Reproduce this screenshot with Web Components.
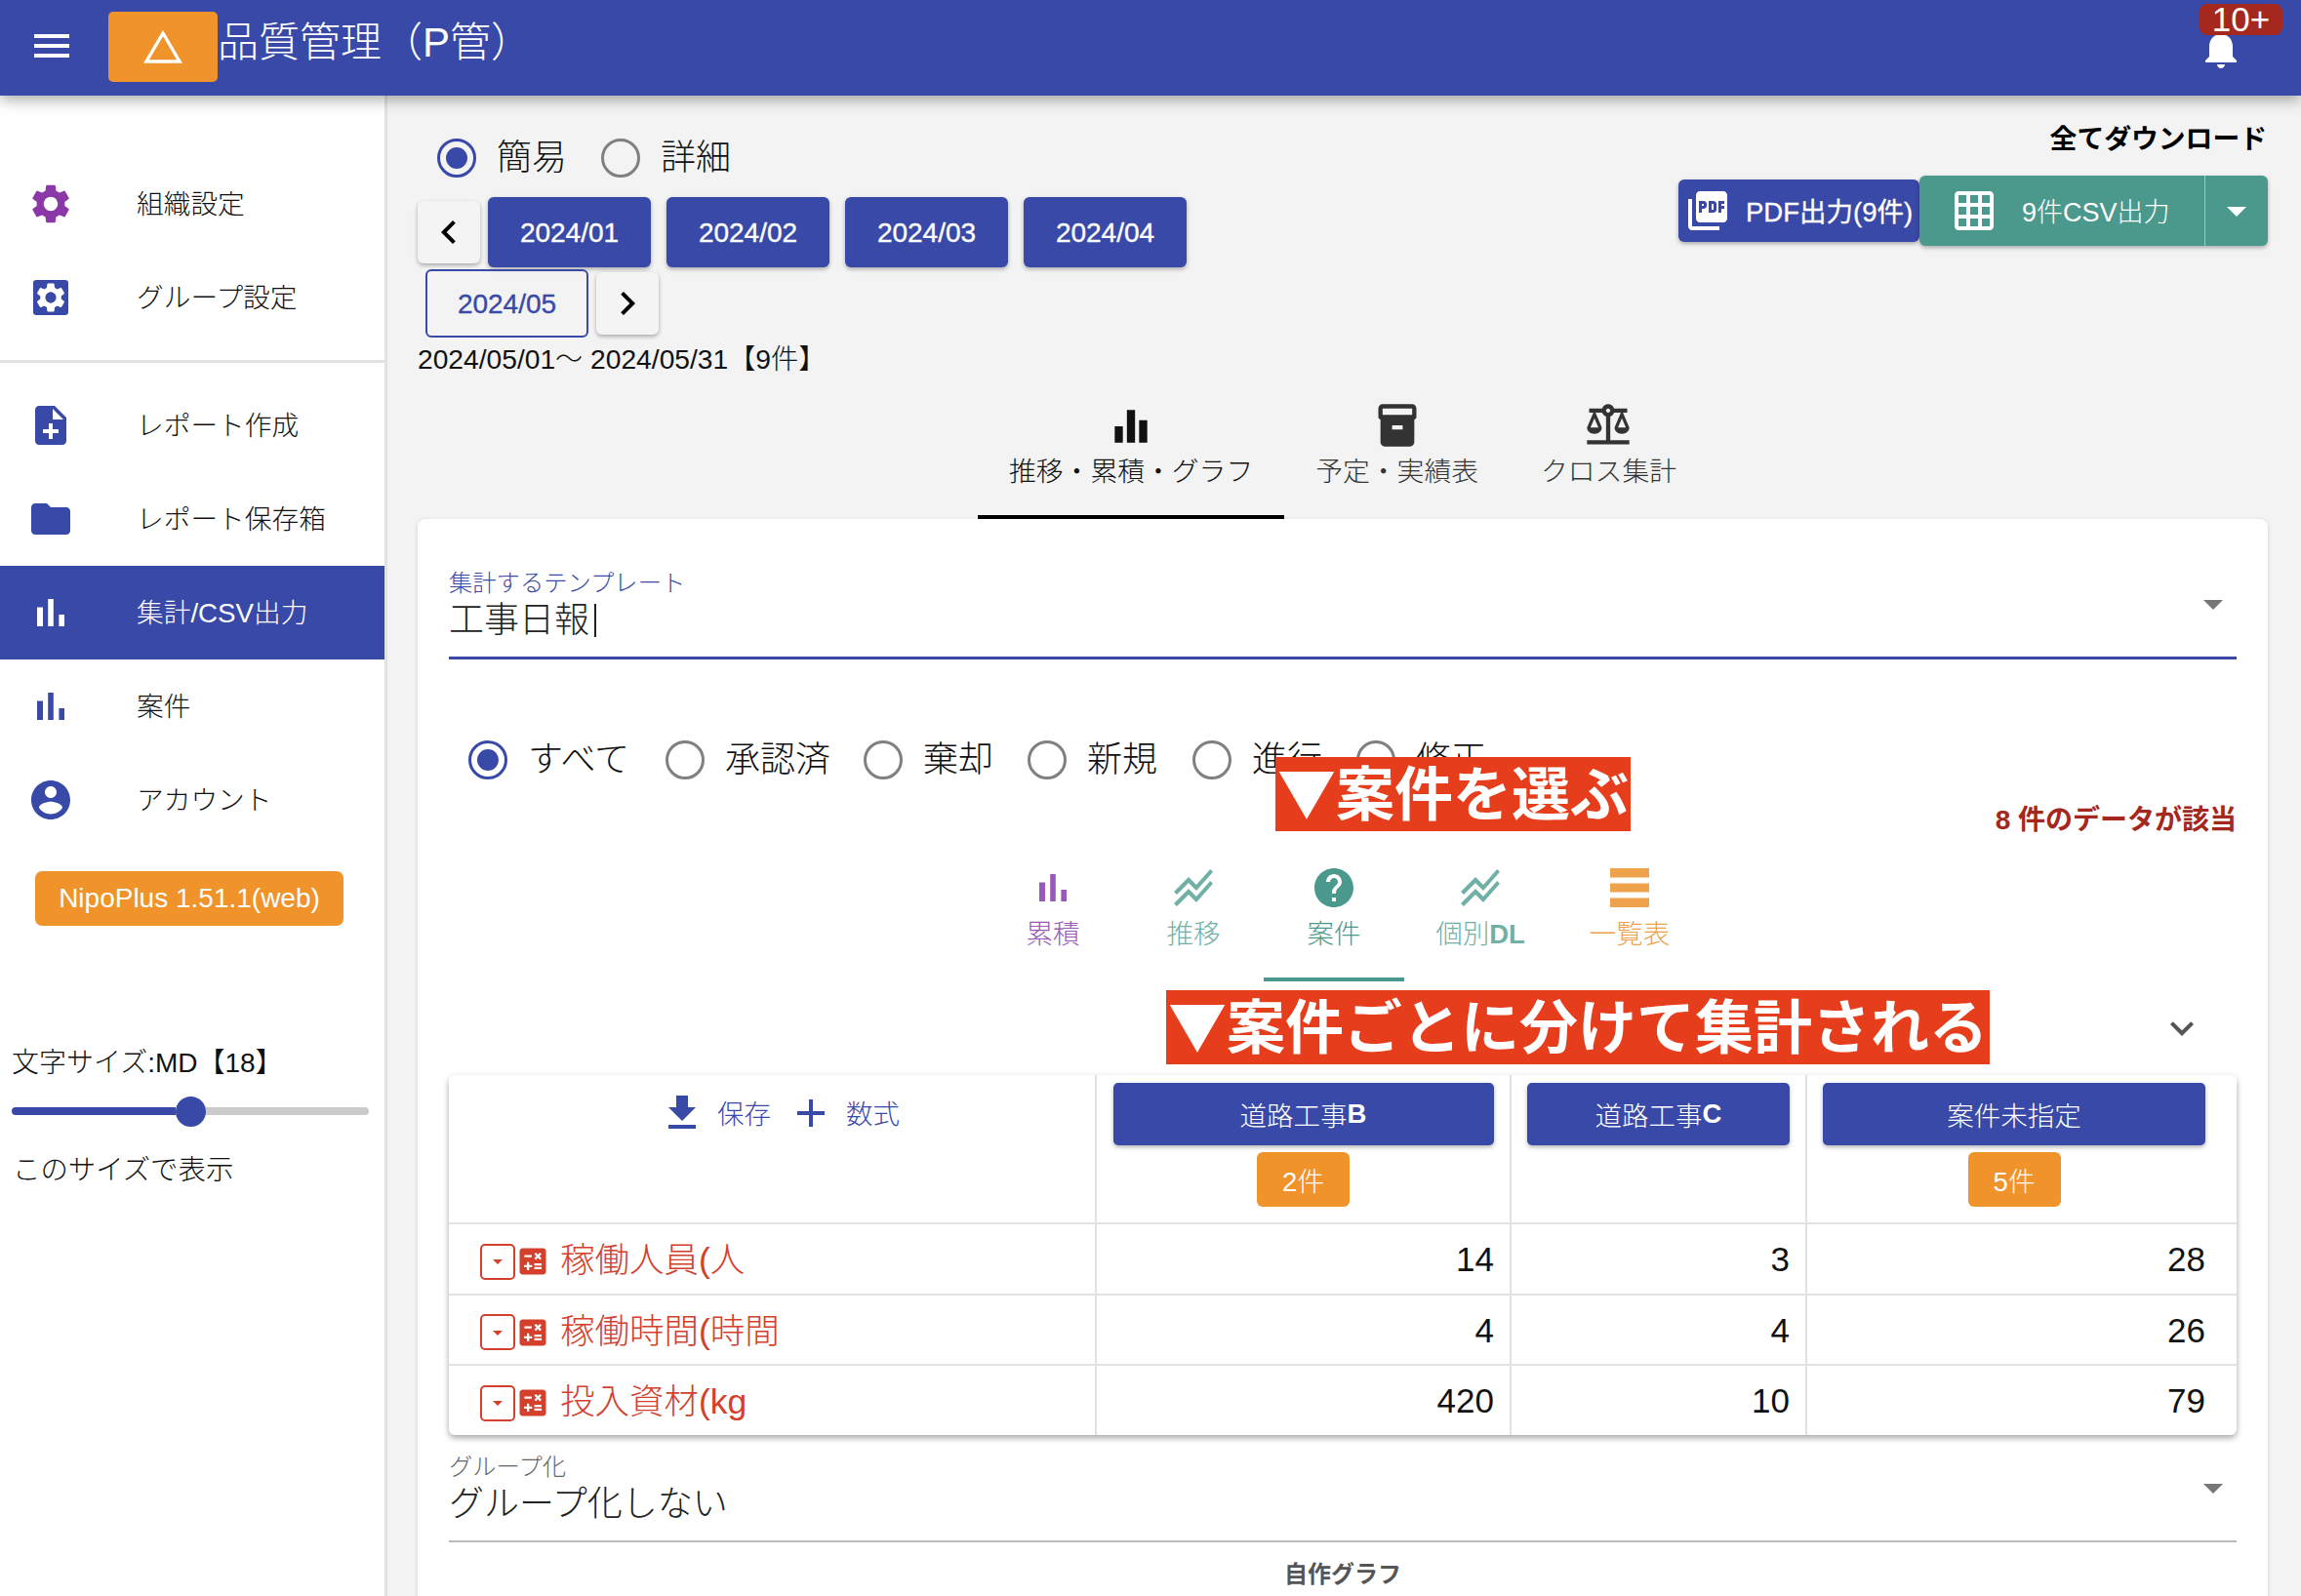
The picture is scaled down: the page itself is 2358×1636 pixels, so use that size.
<!DOCTYPE html>
<html lang="ja">
<head>
<meta charset="utf-8">
<title>品質管理</title>
<style>
    html, body {
        margin: 0;
        padding: 0;
        height: 100%;
        overflow: hidden;
        background: #f3f3f3;
        font-family: "Liberation Sans", "Noto Sans CJK JP", sans-serif;
        color: #111;
    }
</style>
</head>
<body>
<app-shell></app-shell>

<script>
const BLUE = "#3949a7";
const TEAL = "#4b998d";
const ORANGE = "#f0932b";
const GEAR = "M19.14 12.94c.04-.3.06-.61.06-.94 0-.32-.02-.64-.07-.94l2.03-1.58c.18-.14.23-.41.12-.61l-1.92-3.32c-.12-.22-.37-.29-.59-.22l-2.39.96c-.5-.38-1.03-.7-1.62-.94l-.36-2.54c-.04-.24-.24-.41-.48-.41h-3.84c-.24 0-.43.17-.47.41l-.36 2.54c-.59.24-1.13.57-1.62.94l-2.39-.96c-.22-.08-.47 0-.59.22L2.74 8.87c-.12.21-.08.47.12.61l2.03 1.58c-.05.3-.09.63-.09.94s.02.64.07.94l-2.03 1.58c-.18.14-.23.41-.12.61l1.92 3.32c.12.22.37.29.59.22l2.39-.96c.5.38 1.03.7 1.62.94l.36 2.54c.05.24.24.41.48.41h3.84c.24 0 .44-.17.47-.41l.36-2.54c.59-.24 1.13-.56 1.62-.94l2.39.96c.22.08.47 0 .59-.22l1.92-3.32c.12-.22.07-.47-.12-.61l-2.01-1.58zM12 15.6c-1.98 0-3.6-1.62-3.6-3.6s1.62-3.6 3.6-3.6 3.6 1.62 3.6 3.6-1.62 3.6-3.6 3.6z";
const ICONS = {
    menu: `<path d="M3 18h18v-2H3v2zm0-5h18v-2H3v2zm0-7v2h18V6H3z"/>`,
    gear: `<path d="${GEAR}"/>`,
    gearbox: `<rect x="3" y="3" width="18" height="18" rx="1.6"/><path fill="#fff" transform="translate(3 3) scale(.75)" d="${GEAR}"/><circle cx="12" cy="12" r="2.7"/>`,
    note: `<path d="M14 2H6c-1.1 0-1.99.9-1.99 2L4 20c0 1.1.89 2 1.99 2H18c1.1 0 2-.9 2-2V8l-6-6zm2 14h-3v3h-2v-3H8v-2h3v-3h2v3h3v2zm-3-7V3.5L18.5 9H13z"/>`,
    folder: `<path d="M10 4H4c-1.1 0-1.99.9-1.99 2L2 18c0 1.1.9 2 2 2h16c1.1 0 2-.9 2-2V8c0-1.1-.9-2-2-2h-8l-2-2z"/>`,
    bars: `<path d="M5 9.2h3V19H5zM10.6 5h2.8v14h-2.8zm5.6 8H19v6h-2.8z"/>`,
    equalizer: `<path d="M10 20h4V4h-4v16zm-6 0h4v-8H4v8zM16 9v11h4V9h-4z"/>`,
    account: `<path d="M12 2C6.48 2 2 6.48 2 12s4.48 10 10 10 10-4.48 10-10S17.52 2 12 2zm0 3c1.66 0 3 1.34 3 3s-1.34 3-3 3-3-1.34-3-3 1.34-3 3-3zm0 14.2c-2.5 0-4.71-1.28-6-3.22.03-1.99 4-3.08 6-3.08 1.99 0 5.97 1.09 6 3.08-1.29 1.94-3.5 3.22-6 3.22z"/>`,
    box: `<path fill-rule="evenodd" d="M5 2h14c1.1 0 2 .9 2 2v4c0 .6-.4 1-1 1.3V20c0 1.1-.9 2-2 2H6c-1.1 0-2-.9-2-2V9.3C3.4 9 3 8.6 3 8V4c0-1.1.9-2 2-2zm0 2v3h14V4H5zm4.5 8v2h5v-2h-5z"/>`,
    balance: `<path d="M13 7.83c.85-.3 1.53-.98 1.83-1.83H18l-3 7c0 1.66 1.57 3 3.5 3s3.5-1.34 3.5-3l-3-7h2V4h-6.17c-.41-1.17-1.52-2-2.83-2s-2.42.83-2.83 2H3v2h2l-3 7c0 1.66 1.57 3 3.5 3S9 14.66 9 13L6 6h3.17c.3.85.98 1.53 1.83 1.83V19H2v2h20v-2h-9V7.83zM20.37 13h-3.74l1.87-4.36L20.37 13zm-13 0H3.63L5.5 8.64 7.37 13zM12 6c-.55 0-1-.45-1-1s.45-1 1-1 1 .45 1 1-.45 1-1 1z"/>`,
    zigzag: `<path d="M2 19.99l7.5-7.51 4 4 7.09-7.97L22 9.92l-8.5 9.56-4-4-6 6.01-1.5-1.5zm1.5-4.5l6-6.01 4 4L22 3.92l-1.41-1.41-7.09 7.97-4-4L2 13.99l1.5 1.5z"/>`,
    help: `<path d="M12 2C6.48 2 2 6.48 2 12s4.48 10 10 10 10-4.48 10-10S17.52 2 12 2zm1 17h-2v-2h2v2zm2.07-7.75l-.9.92C13.45 12.9 13 13.5 13 15h-2v-.5c0-1.1.45-2.1 1.17-2.83l1.24-1.26c.37-.36.59-.86.59-1.41 0-1.1-.9-2-2-2s-2 .9-2 2H8c0-2.21 1.79-4 4-4s4 1.79 4 4c0 .88-.36 1.68-.93 2.25z"/>`,
    list: `<path d="M2 2h20v4.7H2zM2 9.7h20v4.6H2zM2 17.3h20V22H2z"/>`,
    download: `<path d="M19 9h-4V3H9v6H5l7 7 7-7zM5 18v2h14v-2H5z"/>`,
    plus: `<path d="M19 13h-6v6h-2v-6H5v-2h6V5h2v6h6v2z"/>`,
    calc: `<path d="M19 3H5c-1.1 0-2 .9-2 2v14c0 1.1.9 2 2 2h14c1.1 0 2-.9 2-2V5c0-1.1-.9-2-2-2zm-5.97 4.06L14.09 6l1.41 1.41L16.91 6l1.06 1.06-1.41 1.41 1.41 1.41-1.06 1.06-1.41-1.4-1.41 1.41-1.06-1.06 1.41-1.41-1.41-1.42zm-6.78.66h5v1.5h-5v-1.5zM11.5 16h-2v2H8v-2H6v-1.5h2v-2h1.5v2h2V16zm6.5 1.25h-5v-1.5h5v1.5zm0-2.5h-5v-1.5h5v1.5z"/>`,
    bell: `<path d="M12 22c1.1 0 2-.9 2-2h-4c0 1.1.89 2 2 2zm6-6v-5c0-3.07-1.64-5.64-4.5-6.32V4c0-.83-.67-1.5-1.5-1.5s-1.5.67-1.5 1.5v.68C7.63 5.36 6 7.92 6 11v5l-2 2v1h16v-1l-2-2z"/>`,
    pdf: `<path d="M20 2H8c-1.1 0-2 .9-2 2v12c0 1.1.9 2 2 2h12c1.1 0 2-.9 2-2V4c0-1.1-.9-2-2-2zm-8.5 7.5c0 .83-.67 1.5-1.5 1.5H9v2H7.5V7H10c.83 0 1.5.67 1.5 1.5v1zm5 2c0 .83-.67 1.5-1.5 1.5h-2.5V7H15c.83 0 1.5.67 1.5 1.5v3zm4-3H19v1h1.5V11H19v2h-1.5V7h3v1.5zM9 9.5h1v-1H9v1zM4 6H2v14c0 1.1.9 2 2 2h14v-2H4V6zm10 5.5h1v-3h-1v3z"/>`,
    grid: `<path d="M20 2H4c-1.1 0-2 .9-2 2v16c0 1.1.9 2 2 2h16c1.1 0 2-.9 2-2V4c0-1.1-.9-2-2-2zM8 20H4v-4h4v4zm0-6H4v-4h4v4zm0-6H4V4h4v4zm6 12h-4v-4h4v4zm0-6h-4v-4h4v4zm0-6h-4V4h4v4zm6 12h-4v-4h4v4zm0-6h-4v-4h4v4zm0-6h-4V4h4v4z"/>`,
    chevronDown: `<path d="M7.41 8.59L12 13.17l4.59-4.58L18 10l-6 6-6-6z"/>`,
    left: `<path d="M15.41 7.41L14 6l-6 6 6 6 1.41-1.41L10.83 12z"/>`,
    right: `<path d="M10 6L8.59 7.41 13.17 12l-4.58 4.59L10 18l6-6z"/>`,
    drop: `<path d="M7 10l5 5 5-5z"/>`
};

class MatIcon extends HTMLElement {
    constructor() {
        super();
        this.shadowDOM = this.attachShadow({mode: "open"});
    }
    connectedCallback() {
        const size = this.getAttribute("size") || 48;
        this.shadowDOM.innerHTML = `
        <style>
            :host { display: inline-flex; flex: none; width: ${size}px; height: ${size}px; }
            svg { width: 100%; height: 100%; fill: currentColor; display: block; }
        </style>
        <svg viewBox="0 0 24 24">${ICONS[this.getAttribute("name")]}</svg>`;
    }
}
customElements.define("mat-icon", MatIcon);

class AppHeader extends HTMLElement {
    constructor() {
        super();
        this.shadowDOM = this.attachShadow({mode: "open"});
        this.shadowDOM.innerHTML = `
        <style>
            :host {
                display: flex;
                align-items: flex-start;
                position: relative;
                z-index: 3;
                height: 98px;
                background: ${BLUE};
                color: #fff;
                box-shadow: 0 4px 14px rgba(0,0,0,.35);
            }
            .menu { margin: 23px 0 0 29px; }
            .logo {
                width: 112px;
                height: 72px;
                margin: 12px 0 0 34px;
                background: ${ORANGE};
                border-radius: 5px;
                display: flex;
                align-items: center;
                justify-content: center;
            }
            .title { font-size: 42px; line-height: 44px; margin-top: 22px; font-weight: 300; white-space: nowrap; }
            .bell { position: absolute; left: 2252px; top: 26px; }
            .badge {
                position: absolute;
                left: 2254px;
                top: 4px;
                width: 85px;
                height: 32px;
                border-radius: 8px;
                background: #a5281e;
                font-size: 35px;
                line-height: 32px;
                text-align: center;
            }
        </style>
        <mat-icon class="menu" name="menu"></mat-icon>
        <div class="logo">
            <svg width="42" height="36" viewBox="0 0 42 36"><path d="M21 4 L38 33 H4 Z" fill="none" stroke="#fff" stroke-width="3.4"/></svg>
        </div>
        <div class="title">品質管理（P管）</div>
        <mat-icon class="bell" name="bell"></mat-icon>
        <div class="badge">10+</div>`;
    }
}
customElements.define("app-header", AppHeader);

class NavItem extends HTMLElement {
    constructor() {
        super();
        this.shadowDOM = this.attachShadow({mode: "open"});
    }
    connectedCallback() {
        const active = this.hasAttribute("active");
        this.shadowDOM.innerHTML = `
        <style>
            :host {
                display: flex;
                align-items: center;
                height: 96px;
                padding-left: 28px;
                font-size: 27.7px;
                font-weight: 300;
                background: ${active ? BLUE : "transparent"};
                color: ${active ? "#fff" : "#111"};
            }
            mat-icon { color: ${active ? "#fff" : (this.getAttribute("color") || BLUE)}; margin-right: 64px; }
            .text { padding-bottom: 4px; }
        </style>
        <mat-icon name="${this.getAttribute("icon")}"></mat-icon>
        <span class="text"><slot></slot></span>`;
    }
}
customElements.define("nav-item", NavItem);

class SideNav extends HTMLElement {
    constructor() {
        super();
        this.shadowDOM = this.attachShadow({mode: "open"});
        this.shadowDOM.innerHTML = `
        <style>
            :host {
                display: block;
                box-sizing: border-box;
                width: 397px;
                flex: none;
                background: #fff;
                border-right: 3px solid #e2e2e2;
                padding-top: 63px;
            }
            hr { border: 0; border-top: 3px solid #e2e2e2; margin: 16px 0 16px; }
            .version {
                margin: 25px 0 0 36px;
                width: 316px;
                height: 56px;
                line-height: 56px;
                text-align: center;
                background: ${ORANGE};
                border-radius: 7px;
                color: #fff;
                font-size: 28px;
                white-space: nowrap;
            }
            .size-label { margin: 125px 0 0 12px; font-size: 28px; line-height: 32px; font-weight: 300; white-space: nowrap; }
            .slider { display: flex; align-items: center; width: 366px; height: 32px; margin: 17px 0 0 12px; }
            .on { width: 168px; height: 8px; background: ${BLUE}; border-radius: 4px 0 0 4px; }
            .thumb { width: 31px; height: 31px; border-radius: 50%; background: ${BLUE}; flex: none; }
            .off { flex: 1; height: 8px; background: #cacaca; border-radius: 0 4px 4px 0; }
            .apply { margin: 28px 0 0 13px; font-size: 28.4px; line-height: 32px; font-weight: 300; }
        </style>
        <nav-item icon="gear" color="#8a37a8">組織設定</nav-item>
        <nav-item icon="gearbox">グループ設定</nav-item>
        <hr>
        <nav-item icon="note">レポート作成</nav-item>
        <nav-item icon="folder">レポート保存箱</nav-item>
        <nav-item icon="bars" active>集計/CSV出力</nav-item>
        <nav-item icon="bars">案件</nav-item>
        <nav-item icon="account">アカウント</nav-item>
        <div class="version">NipoPlus 1.51.1(web)</div>
        <div class="size-label">文字サイズ:MD【18】</div>
        <div class="slider"><div class="on"></div><div class="thumb"></div><div class="off"></div></div>
        <div class="apply">このサイズで表示</div>`;
    }
}
customElements.define("side-nav", SideNav);

class RadioOption extends HTMLElement {
    constructor() {
        super();
        this.shadowDOM = this.attachShadow({mode: "open"});
    }
    connectedCallback() {
        const on = this.hasAttribute("checked");
        this.shadowDOM.innerHTML = `
        <style>
            :host { display: inline-flex; align-items: center; font-size: 36px; font-weight: 300; line-height: 48px; color: #111; white-space: nowrap; }
            .ring {
                box-sizing: border-box;
                width: 40px;
                height: 40px;
                border-radius: 50%;
                border: 3px solid ${on ? BLUE : "#808080"};
                margin-right: 21px;
                display: flex;
                align-items: center;
                justify-content: center;
                flex: none;
            }
            .dot { width: 22px; height: 22px; border-radius: 50%; background: ${BLUE}; }
        </style>
        <span class="ring">${on ? '<span class="dot"></span>' : ''}</span><slot></slot>`;
    }
}
customElements.define("radio-option", RadioOption);

class MonthButton extends HTMLElement {
    constructor() {
        super();
        this.shadowDOM = this.attachShadow({mode: "open"});
    }
    connectedCallback() {
        const outlined = this.hasAttribute("outlined");
        this.shadowDOM.innerHTML = `
        <style>
            :host {
                display: flex;
                align-items: center;
                justify-content: center;
                box-sizing: border-box;
                width: 167px;
                height: ${outlined ? 70 : 72}px;
                margin: 0 8px;
                padding-top: 1px;
                border-radius: 6px;
                font-size: 28px;
                -webkit-text-stroke: .35px currentColor;
                background: ${outlined ? "transparent" : BLUE};
                color: ${outlined ? BLUE : "#fff"};
                border: ${outlined ? `2px solid ${BLUE}` : "0"};
                box-shadow: ${outlined ? "none" : "0 2px 4px rgba(0,0,0,.3)"};
            }
        </style>
        <slot></slot>`;
    }
}
customElements.define("month-button", MonthButton);

class PageButton extends HTMLElement {
    constructor() {
        super();
        this.shadowDOM = this.attachShadow({mode: "open"});
    }
    connectedCallback() {
        this.shadowDOM.innerHTML = `
        <style>
            :host {
                display: flex;
                align-items: center;
                justify-content: center;
                width: 64px;
                height: 64px;
                border-radius: 6px;
                background: #f4f4f4;
                color: #000;
                box-shadow: 0 2px 4px rgba(0,0,0,.3);
            }
        </style>
        <mat-icon name="${this.getAttribute("dir")}"></mat-icon>`;
    }
}
customElements.define("page-button", PageButton);

class DownloadBar extends HTMLElement {
    constructor() {
        super();
        this.shadowDOM = this.attachShadow({mode: "open"});
        this.shadowDOM.innerHTML = `
        <style>
            :host { display: block; width: 604px; color: #fff; font-size: 27.5px; }
            .title { color: #000; font-weight: 700; font-size: 27.8px; line-height: 36px; text-align: right; padding: 27px 1px 0 0; }
            .row { display: flex; align-items: center; margin-top: 19px; }
            .pdf {
                display: flex; align-items: center;
                box-sizing: border-box;
                width: 247px; height: 64px;
                padding-left: 6px;
                background: ${BLUE};
                border-radius: 6px;
                box-shadow: 0 2px 4px rgba(0,0,0,.3);
                white-space: nowrap;
                -webkit-text-stroke: .3px #fff;
            }
            .pdf mat-icon { margin-right: 15px; }
            span { padding-bottom: 2px; }
            .csv {
                display: flex; align-items: center;
                width: 357px; height: 72px;
                background: ${TEAL};
                border-radius: 6px;
                box-shadow: 0 2px 4px rgba(0,0,0,.3);
            }
            .csv .main { display: flex; align-items: center; flex: 1; height: 100%; padding-left: 32px; border-right: 1px solid #9cc9c2; white-space: nowrap; font-weight: 300; font-size: 27px; }
            .csv .main mat-icon { margin-right: 25px; }
            .csv .more { width: 64px; display: flex; justify-content: center; }
        </style>
        <div class="title">全てダウンロード</div>
        <div class="row">
            <div class="pdf"><mat-icon name="pdf"></mat-icon><span>PDF出力(9件)</span></div>
            <div class="csv">
                <div class="main"><mat-icon name="grid"></mat-icon><span>9件CSV出力</span></div>
                <div class="more"><mat-icon name="drop"></mat-icon></div>
            </div>
        </div>`;
    }
}
customElements.define("download-bar", DownloadBar);

class IconTab extends HTMLElement {
    constructor() {
        super();
        this.shadowDOM = this.attachShadow({mode: "open"});
    }
    connectedCallback() {
        const active = this.hasAttribute("active");
        const size = this.getAttribute("size") || 48;
        const line = this.getAttribute("line") || "#000";
        this.shadowDOM.innerHTML = `
        <style>
            :host {
                display: flex;
                flex-direction: column;
                align-items: center;
                box-sizing: border-box;
                color: ${this.getAttribute("color") || "inherit"};
                font-size: var(--tab-font, 27.8px);
                font-weight: 300;
                line-height: 36px;
                white-space: nowrap;
                border-bottom: 4px solid ${active ? line : "transparent"};
            }
            .label { margin-top: var(--tab-gap, 4px); }
        </style>
        <mat-icon name="${this.getAttribute("icon")}" size="${size}"></mat-icon>
        <div class="label"><slot></slot></div>`;
    }
}
customElements.define("icon-tab", IconTab);

class SelectField extends HTMLElement {
    constructor() {
        super();
        this.shadowDOM = this.attachShadow({mode: "open"});
    }
    connectedCallback() {
        const focus = this.hasAttribute("focus");
        this.shadowDOM.innerHTML = `
        <style>
            :host {
                display: block;
                position: relative;
                border-bottom: ${focus ? 3 : 2}px solid ${focus ? BLUE : "#bdbdbd"};
                padding-bottom: 13px;
                font-weight: 300;
            }
            .label { font-size: 24.3px; line-height: 24px; padding-top: 1px; color: ${focus ? BLUE : "#666"}; }
            .value { font-size: 36px; line-height: 48px; margin-top: 2px; color: #222; }
            .arrow { position: absolute; right: 0; top: 10px; color: #777; }
            .caret { display: inline-block; width: 2px; height: 34px; background: #222; margin-left: 5px; vertical-align: -5px; }
        </style>
        <div class="label">${this.getAttribute("label")}</div>
        <div class="value"><slot></slot>${focus ? '<span class="caret"></span>' : ''}</div>
        <mat-icon class="arrow" name="drop"></mat-icon>`;
    }
}
customElements.define("select-field", SelectField);

class MetricRow extends HTMLElement {
    constructor() {
        super();
        this.shadowDOM = this.attachShadow({mode: "open"});
    }
    connectedCallback() {
        const vals = this.getAttribute("values").split(",");
        this.shadowDOM.innerHTML = `
        <style>
            :host {
                display: grid;
                grid-template-columns: 664px 425px 303px 1fr;
                height: 72.5px;
                box-sizing: border-box;
                border-top: 2px solid #e2e2e2;
            }
            .name {
                display: flex; align-items: center;
                padding-left: 32px;
                color: #d4402b;
                font-size: 35.5px;
                font-weight: 300;
                border-right: 2px solid #e2e2e2;
                white-space: nowrap;
            }
            .name .text { padding-bottom: 3px; }
            .drop {
                box-sizing: border-box;
                width: 36px; height: 37px;
                border: 2px solid #d4402b;
                border-radius: 5px;
                display: flex; align-items: center; justify-content: center;
                margin: 6px 0 0 0;
                flex: none;
            }
            .num {
                display: flex; align-items: center; justify-content: flex-end;
                font-size: 35px;
                padding: 2px 16px 0 0;
                border-right: 2px solid #e2e2e2;
                color: #111;
            }
            .num:last-child { border-right: 0; padding-right: 32px; }
            .calc { margin: 6px 10px 0 0; }
        </style>
        <div class="name">
            <span class="drop"><mat-icon name="drop" size="24"></mat-icon></span>
            <mat-icon class="calc" name="calc" size="36"></mat-icon>
            <span class="text"><slot></slot></span>
        </div>
        ${vals.map(v => `<div class="num">${v}</div>`).join("")}`;
    }
}
customElements.define("metric-row", MetricRow);

class CaseTable extends HTMLElement {
    constructor() {
        super();
        this.shadowDOM = this.attachShadow({mode: "open"});
        this.shadowDOM.innerHTML = `
        <style>
            :host {
                display: block;
                border-radius: 6px;
                background: #fff;
                box-shadow: 0 3px 6px rgba(0,0,0,.35);
            }
            .head { display: grid; grid-template-columns: 664px 425px 303px 1fr; height: 151px; }
            .tools-cell { border-right: 2px solid #e2e2e2; padding-left: 15px; }
            .tools {
                display: flex; align-items: center; justify-content: center;
                height: 78px;
                color: ${BLUE};
                font-size: 27.5px;
                font-weight: 300;
            }
            .tools span { margin-left: 12px; padding-bottom: 2px; }
            .tools mat-icon:nth-of-type(2) { margin-left: 17px; }
            .col { display: flex; flex-direction: column; align-items: center; padding-top: 8px; border-right: 2px solid #e2e2e2; }
            .col:last-child { border-right: 0; align-items: flex-start; padding-left: 16px; }
            .stack { display: flex; flex-direction: column; align-items: center; }
            .case {
                height: 64px;
                display: flex; align-items: center; justify-content: center;
                background: ${BLUE};
                color: #fff;
                font-size: 27.5px;
                font-weight: 300;
                border-radius: 5px;
                box-shadow: 0 2px 4px rgba(0,0,0,.3);
            }
            .case b { font-weight: 700; }
            .count {
                width: 95px; height: 56px;
                margin-top: 7px;
                display: flex; align-items: center; justify-content: center;
                background: ${ORANGE};
                color: #fff;
                border-radius: 6px;
                font-size: 27.5px;
                font-weight: 300;
            }
        </style>
        <div class="head">
            <div class="tools-cell">
                <div class="tools">
                    <mat-icon name="download"></mat-icon><span>保存</span>
                    <mat-icon name="plus"></mat-icon><span>数式</span>
                </div>
            </div>
            <div class="col">
                <div class="stack">
                    <div class="case" style="width:390px">道路工事<b>B</b></div>
                    <div class="count">2件</div>
                </div>
            </div>
            <div class="col">
                <div class="case" style="width:269px">道路工事<b>C</b></div>
            </div>
            <div class="col">
                <div class="stack">
                    <div class="case" style="width:392px">案件未指定</div>
                    <div class="count">5件</div>
                </div>
            </div>
        </div>
        <metric-row values="14,3,28">稼働人員(人</metric-row>
        <metric-row values="4,4,26">稼働時間(時間</metric-row>
        <metric-row values="420,10,79">投入資材(kg</metric-row>`;
    }
}
customElements.define("case-table", CaseTable);

class ReportCard extends HTMLElement {
    constructor() {
        super();
        this.shadowDOM = this.attachShadow({mode: "open"});
        this.shadowDOM.innerHTML = `
        <style>
            :host {
                display: block;
                position: relative;
                box-sizing: border-box;
                background: #fff;
                border-radius: 8px 8px 0 0;
                padding: 53px 32px 60px;
                box-shadow: 0 1px 4px rgba(0,0,0,.15);
            }
            .status { display: flex; height: 60px; align-items: center; margin-top: 73px; padding-left: 20px; }
            .status radio-option:nth-child(1) { width: 202px; }
            .status radio-option:nth-child(2) { width: 203px; }
            .status radio-option:nth-child(3) { width: 168px; }
            .status radio-option:nth-child(4) { width: 169px; }
            .status radio-option:nth-child(5) { width: 168px; }
            .hits { text-align: right; color: #a5281e; font-weight: 700; font-size: 28px; line-height: 36px; margin-top: 14px; }
            .sub { display: flex; justify-content: center; margin-top: 21px; height: 126px; padding-top: 6px; box-sizing: border-box; --tab-font: 27.5px; --tab-gap: 6px; }
            .sub icon-tab { width: 144px; padding-bottom: 28px; }
            b { font-weight: 700; }
            .collapse { height: 96px; display: flex; align-items: center; justify-content: flex-end; padding-right: 32px; color: #555; }
            .banner {
                position: absolute;
                height: 76px;
                line-height: 68px;
                background: #e63e1c;
                color: #fff;
                font-family: "Noto Sans CJK JP", "Liberation Sans", sans-serif;
                font-size: 60px;
                font-weight: 700;
                white-space: nowrap;
                text-align: center;
            }
            select-field.group { margin-top: 20px; }
            .own { text-align: center; color: #555; font-weight: 700; font-size: 24px; line-height: 30px; margin-top: 18px; }
        </style>
        <select-field label="集計するテンプレート" focus>工事日報</select-field>
        <div class="status">
            <radio-option checked>すべて</radio-option>
            <radio-option>承認済</radio-option>
            <radio-option>棄却</radio-option>
            <radio-option>新規</radio-option>
            <radio-option>進行</radio-option>
            <radio-option>修正</radio-option>
        </div>
        <div class="hits">8 件のデータが該当</div>
        <div class="sub">
            <icon-tab icon="bars" color="#9b59b6">累積</icon-tab>
            <icon-tab icon="zigzag" color="#70b0a6">推移</icon-tab>
            <icon-tab icon="help" color="${TEAL}" line="${TEAL}" active>案件</icon-tab>
            <icon-tab icon="zigzag" color="#70b0a6" style="width:156px">個別<b>DL</b></icon-tab>
            <icon-tab icon="list" color="#eda24b" style="width:150px">一覧表</icon-tab>
        </div>
        <div class="collapse"><mat-icon name="chevronDown"></mat-icon></div>
        <case-table></case-table>
        <select-field class="group" label="グループ化">グループ化しない</select-field>
        <div class="own">自作グラフ</div>
        <div class="banner" style="left:879px;top:244px;width:364px">▼案件を選ぶ</div>
        <div class="banner" style="left:767px;top:483px;width:844px">▼案件ごとに分けて集計される</div>`;
    }
}
customElements.define("report-card", ReportCard);

class AppShell extends HTMLElement {
    constructor() {
        super();
        this.shadowDOM = this.attachShadow({mode: "open"});
        this.shadowDOM.innerHTML = `
        <style>
            :host { display: block; height: 1636px; overflow: hidden; }
            .body { display: flex; height: 1538px; }
            main { flex: 1; min-width: 0; padding: 0 34px 0 31px; }
            .top { display: flex; justify-content: space-between; height: 287px; }
            .radios { display: flex; height: 64px; padding: 32px 0 8px 20px; }
            .radios radio-option { width: 168px; }
            .months { display: flex; flex-wrap: wrap; align-items: center; width: 800px; row-gap: 1px; }
            .months .second { margin-left: 8px; }
            .months .break { flex-basis: 100%; height: 0; }
            .range { font-size: 28.2px; line-height: 34px; margin-top: 5px; font-weight: 300; white-space: nowrap; }
            .tabs { display: flex; justify-content: center; height: 147px; }
            .tabs icon-tab { padding: 25px 32px 0; }
        </style>
        <app-header></app-header>
        <div class="body">
            <side-nav></side-nav>
            <main>
                <div class="top">
                    <div>
                        <div class="radios">
                            <radio-option checked>簡易</radio-option>
                            <radio-option>詳細</radio-option>
                        </div>
                        <div class="months">
                            <page-button dir="left"></page-button>
                            <month-button>2024/01</month-button>
                            <month-button>2024/02</month-button>
                            <month-button>2024/03</month-button>
                            <month-button>2024/04</month-button>
                            <div class="break"></div>
                            <month-button class="second" outlined>2024/05</month-button>
                            <page-button dir="right"></page-button>
                        </div>
                        <div class="range">2024/05/01〜 2024/05/31【9件】</div>
                    </div>
                    <download-bar></download-bar>
                </div>
                <div class="tabs">
                    <icon-tab icon="equalizer" size="50" style="padding-top:27px" active>推移・累積・グラフ</icon-tab>
                    <icon-tab icon="box" size="52" color="#333">予定・実績表</icon-tab>
                    <icon-tab icon="balance" size="52" color="#333">クロス集計</icon-tab>
                </div>
                <report-card></report-card>
            </main>
        </div>`;
    }
}
customElements.define("app-shell", AppShell);
</script>
</body>
</html>
